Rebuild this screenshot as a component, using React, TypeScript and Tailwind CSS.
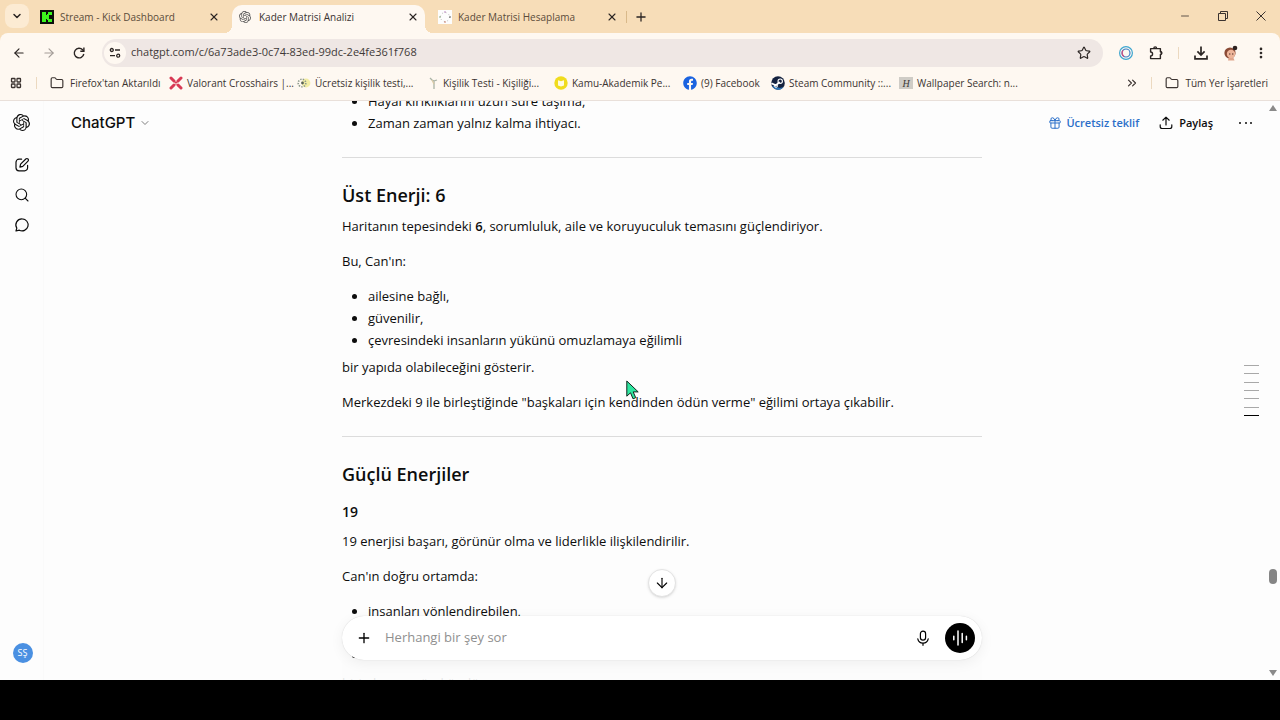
import type { ReactNode } from "react";
import {
    ArrowDown,
    ArrowLeft,
    ArrowRight,
    ChevronDown,
    ChevronsRight,
    EllipsisVertical,
    Folder,
    Gift,
    LayoutGrid,
    Minus,
    Plus,
    Search,
    Star,
    X,
} from "lucide-react";
import { SiOpenai } from "react-icons/si";
import { FaFacebook } from "react-icons/fa";

function KickLogo() {
    return (
        <svg viewBox="0 0 14 14" className="size-3.5 shrink-0" shapeRendering="crispEdges">
            <rect width="14" height="14" fill="#0b0f0b" />
            <g fill="#3df51d">
                <rect x="2" y="2" width="4" height="10" />
                <rect x="6" y="5" width="2" height="4" />
                <rect x="7" y="4" width="2" height="6" />
                <rect x="8" y="2" width="4" height="3" />
                <rect x="8" y="9" width="4" height="3" />
            </g>
        </svg>
    );
}

function MatrixLogo() {
    return (
        <svg viewBox="0 0 14 14" className="size-3.5 shrink-0">
            <rect width="14" height="14" fill="#fdfdfd" />
            <circle cx="7" cy="7" r="4.5" fill="none" stroke="#b9b9b4" strokeDasharray="1 2.53" />
            <circle cx="7" cy="2" r="0.8" fill="#b07ab8" />
            <circle cx="7" cy="12" r="0.8" fill="#c26d5c" />
            <circle cx="2" cy="7" r="0.8" fill="#7e9f72" />
            <circle cx="12" cy="7" r="0.8" fill="#444" />
        </svg>
    );
}

function ReloadIcon() {
    return (
        <svg viewBox="0 0 16 16" className="size-4" fill="none" stroke="currentColor" strokeWidth="1.4">
            <path d="M12.8 9A4.8 4.8 0 1 1 11.6 4.800L12.8 6" />
            <path d="M12.900 2.600V6.200H9.300" />
        </svg>
    );
}

function TuneIcon() {
    return (
        <svg viewBox="0 0 12 12" className="size-3" fill="none" stroke="#2b2523" strokeWidth="1.3">
            <circle cx="2.8" cy="3" r="1.5" />
            <path d="M6 3h5M1 8.7h5" />
            <circle cx="9.2" cy="8.7" r="1.5" />
        </svg>
    );
}

function ValorantIcon() {
    return (
        <svg viewBox="0 0 14 14" className="size-3.5 shrink-0" stroke="#d83a55" strokeWidth="3" strokeLinecap="round">
            <path d="M2 2l3 3M12 2L9 5M2 12l3-3M12 12L9 9" />
            <path d="M5 5l4 4M9 5L5 9" strokeWidth="1.2" />
        </svg>
    );
}

function SunIcon() {
    return (
        <svg viewBox="0 0 14 14" className="size-3.5 shrink-0" fill="none">
            <circle cx="9" cy="7" r="4.4" fill="#f3eda5" />
            <circle cx="5" cy="7" r="3.8" stroke="#8d9a8c" strokeWidth="1.6" strokeDasharray="1.4 1.2" />
            <circle cx="5.5" cy="7" r="1.4" fill="#566056" />
        </svg>
    );
}

function SproutIcon() {
    return (
        <svg viewBox="0 0 14 14" className="size-3.5 shrink-0" fill="none" stroke="#aab3a6" strokeWidth="1.3">
            <path d="M3 2l2 2 2 1M7 13V5l3-1" />
            <path d="M5 4l2 4" stroke="#d9c9a4" />
        </svg>
    );
}

function KamuIcon() {
    return (
        <svg viewBox="0 0 14 14" className="size-3.5 shrink-0">
            <circle cx="7" cy="7" r="6.7" fill="#f0dc1e" />
            <path d="M4 4.2l3 1 3-1v5.3l-3 1-3-1z" fill="#fffbe0" />
        </svg>
    );
}

function SteamIcon() {
    return (
        <svg viewBox="0 0 14 14" className="size-3.5 shrink-0" fill="none">
            <circle cx="7" cy="7" r="6.8" fill="#14223f" />
            <path d="M1 9.800A6.800 6.800 0 0 0 12.600 11L9 12z" fill="#2f75b5" />
            <path d="M.4 7.200l4.400 2.200L8.600 6" stroke="#fff" strokeWidth="1.800" />
            <circle cx="9.200" cy="5.200" r="2.200" stroke="#fff" strokeWidth="1.100" />
            <circle cx="5" cy="9.800" r="1.500" stroke="#fff" />
        </svg>
    );
}

function WallpaperIcon() {
    return (
        <span className="flex h-3 w-3.5 shrink-0 items-center justify-center bg-[#cfccc6] font-['Liberation_Serif',serif] text-[10px] italic text-[#3c3a38]">
            H
        </span>
    );
}

function ExtensionRing() {
    return (
        <svg viewBox="0 0 16 16" className="size-4" fill="none">
            <circle cx="8" cy="8" r="6.4" stroke="#3fa6cf" strokeWidth="1.2" />
            <circle cx="8" cy="8" r="4" stroke="#3e7fc4" strokeWidth="1.2" />
            <path d="M5 5.4A4 4 0 0 0 6 11.4" stroke="#d5497a" strokeWidth="1.2" />
        </svg>
    );
}

function PuzzleIcon() {
    return (
        <svg viewBox="0 0 16 16" className="size-4" fill="none" stroke="#2b2523" strokeWidth="1.4" strokeLinejoin="round">
            <path d="M2.600 3.600h9.800v3.200c1.600 0 1.600 2.600 0 2.600v4.200H2.600v-2.600c2.600 0 2.600-4 0-4z" />
            <path d="M5.800 3.400c0-2 2.800-2 2.800 0M12.600 6.800c1.600 0 1.600 2.600 0 2.600" />
        </svg>
    );
}

function DownloadIcon() {
    return (
        <svg viewBox="0 0 16 16" className="size-4" fill="none" stroke="#2b2523" strokeWidth="1.7">
            <path d="M8 1.5v8.2M4.4 6.4L8 10l3.6-3.6M2 10.6v3.2h12v-3.2" />
        </svg>
    );
}

function ProfileFace() {
    return (
        <svg viewBox="0 0 16 16" className="size-4">
            <circle cx="7" cy="8" r="5.6" fill="#8a4a35" />
            <circle cx="12" cy="3" r="2.3" fill="#2c2220" />
            <circle cx="8" cy="9" r="4.2" fill="#eeb59a" />
            <path d="M5.5 13h5l1 2.5H5z" fill="#dfa58c" />
            <path d="M6 9h1.4M9 9h1.4" stroke="#4b2c24" />
        </svg>
    );
}

function EditIcon() {
    return (
        <svg viewBox="0 0 16 16" className="size-4" fill="none" stroke="currentColor" strokeWidth="1.2" strokeLinecap="round" strokeLinejoin="round">
            <path d="M7.6 2.2H5A3 3 0 0 0 2 5.200v5.600a3 3 0 0 0 3 3h5.600a3 3 0 0 0 3-3V8.400" />
            <path d="M11.800 2a1.500 1.500 0 0 1 2.200 2.200L8.800 9.400l-2.900.7.7-2.900z" />
        </svg>
    );
}

function ChatIcon() {
    return (
        <svg viewBox="0 0 16 16" className="size-4" fill="none" stroke="currentColor" strokeWidth="1.2" strokeLinejoin="round">
            <path d="M8.200 1.900a6 6 0 1 1-2.900 11.300L2 14l.8-2.900A6 6 0 0 1 8.200 1.900z" />
        </svg>
    );
}

function ShareIcon() {
    return (
        <svg viewBox="0 0 14 14" className="size-3.5" fill="none" stroke="currentColor" strokeWidth="1.2" strokeLinecap="round" strokeLinejoin="round">
            <path d="M7 9V1.200M3.800 4.200L7 1.100l3.200 3.100M1.200 8.800v1.700a2 2 0 0 0 2 2h7.600a2 2 0 0 0 2-2V8.800" />
        </svg>
    );
}

function MicIcon() {
    return (
        <svg viewBox="0 0 16 16" className="size-4" fill="none" stroke="currentColor" strokeWidth="1.200" strokeLinecap="round">
            <rect x="5.400" y="1.200" width="5.200" height="9" rx="2.600" />
            <path d="M2.800 8.800a5.300 5.300 0 0 0 10.400 0M8 13v2.300" />
        </svg>
    );
}

function VoiceIcon() {
    return (
        <svg viewBox="0 0 16 16" className="size-4" stroke="#fff" strokeWidth="1.500" strokeLinecap="round">
            <path d="M1.800 6.300v3.400M6 1v14M10.200 3.500v9M14.400 6.300v3.400" />
        </svg>
    );
}

type TabProps = { icon: ReactNode; title: string; active?: boolean };

function Tab({ icon, title, active }: TabProps) {
    return (
        <div
            className={
                active
                    ? "relative flex h-7 w-[193px] items-center rounded-t-[10px] bg-[#fef8f1] pl-[7px] pr-1.5 text-[#3b3330]"
                    : "flex h-7 w-[193px] items-center pl-[7px] pr-1.5 text-[#5b4c3a]"
            }
        >
            {active && (
                <>
                    <span className="absolute -left-2 bottom-0 size-2 bg-[radial-gradient(circle_at_0_0,#f7ddb8_8px,#fef8f1_8px)]" />
                    <span className="absolute -right-2 bottom-0 size-2 bg-[radial-gradient(circle_at_100%_0,#f7ddb8_8px,#fef8f1_8px)]" />
                </>
            )}
            <span className="w-3.5 pb-1">{icon}</span>
            <span className="ml-1.5 flex-1 truncate pb-1">{title}</span>
            <button aria-label="Kapat" className="pb-1 text-[#2b2523]">
                <X className="size-3" strokeWidth={2.2} />
            </button>
        </div>
    );
}

const bookmarks = [
    { title: "Firefox'tan Aktarıldı", width: "w-[119px]", gap: "gap-1.5", icon: <Folder className="size-3.5 shrink-0" strokeWidth={2} /> },
    { title: "Valorant Crosshairs |...", width: "w-[128px]", gap: "gap-1", icon: <ValorantIcon /> },
    { title: "Ücretsiz kişilik testi,...", width: "w-[130px]", gap: "gap-1", icon: <SunIcon /> },
    { title: "Kişilik Testi - Kişiliği...", width: "w-[127px]", gap: "gap-0.5", icon: <SproutIcon /> },
    { title: "Kamu-Akademik Pe...", width: "w-[129px]", gap: "gap-1", icon: <KamuIcon /> },
    { title: "(9) Facebook", width: "w-[88px]", gap: "gap-1", icon: <FaFacebook className="size-3.5 shrink-0 text-[#1b63e0]" /> },
    { title: "Steam Community ::...", width: "w-[128px]", gap: "gap-1", icon: <SteamIcon /> },
    { title: "Wallpaper Search: n...", width: "w-[128px]", gap: "gap-1", icon: <WallpaperIcon /> },
];

function BrowserChrome() {
    return (
        <div className="bg-[#f7ddb8] text-[10px] text-[#3b3330]">
            <div className="flex h-[33px] items-end">
                <button aria-label="Sekmelerde ara" className="mb-[5px] ml-[5px] flex size-6 items-center justify-center rounded-lg bg-[#fcebd3] text-[#2b2523]">
                    <ChevronDown className="size-3" strokeWidth={3} />
                </button>
                <div className="ml-1 flex flex-1 items-end">
                    <div className="flex gap-1.5">
                        <Tab icon={<KickLogo />} title="Stream - Kick Dashboard" />
                        <Tab active icon={<SiOpenai className="size-3 text-[#555]" />} title="Kader Matrisi Analizi" />
                        <Tab icon={<MatrixLogo />} title="Kader Matrisi Hesaplama" />
                    </div>
                    <div className="ml-0.5 flex h-7 items-center pb-1">
                        <span className="h-3 w-px bg-[#d9b98a]" />
                        <button aria-label="Yeni sekme" className="ml-[7px] text-[#2b2523]">
                            <Plus className="size-3.5" strokeWidth={2.2} />
                        </button>
                    </div>
                </div>
                <div className="flex h-[33px] items-center pb-px text-[#3b3330]">
                    <button aria-label="Simge durumuna küçült" className="flex w-[38px] justify-center">
                        <Minus className="size-3" strokeWidth={1.6} />
                    </button>
                    <button aria-label="Önceki boyut" className="flex w-[38px] justify-center">
                        <svg viewBox="0 0 10 10" className="size-2.5" fill="none" stroke="currentColor">
                            <path d="M.5 2.500h7v7h-7zM2.500 2.500V.5h7v7h-2" />
                        </svg>
                    </button>
                    <button aria-label="Pencereyi kapat" className="flex w-[38px] justify-center">
                        <svg viewBox="0 0 10 10" className="size-2.5" stroke="currentColor">
                            <path d="M.5.5l9 9M9.500.5l-9 9" />
                        </svg>
                    </button>
                </div>
            </div>

            <div className="rounded-t-lg border-b border-[#e9e0da] bg-[#fef8f1]">
                <div className="flex h-[39px] items-center px-1 text-[#2b2523]">
                    <button aria-label="Geri" className="flex w-[30px] justify-center"><ArrowLeft className="size-3.5" /></button>
                    <button aria-label="İleri" className="flex w-[30px] justify-center text-[#a39c97]"><ArrowRight className="size-3.5" /></button>
                    <button aria-label="Yenile" className="flex w-[30px] justify-center"><ReloadIcon /></button>
                    <div className="ml-2 flex h-7 flex-1 items-center rounded-full bg-[#efe7e4] pl-0.5 pr-3">
                        <span className="flex size-[22px] items-center justify-center rounded-full bg-[#fef8f1]"><TuneIcon /></span>
                        <input
                            aria-label="Adres"
                            className="ml-[5px] flex-1 bg-transparent text-[11px] text-[#3f3a38] outline-none"
                            defaultValue="chatgpt.com/c/6a73ade3-0c74-83ed-99dc-2e4fe361f768"
                        />
                        <button aria-label="Yer işareti ekle"><Star className="size-3.5" strokeWidth={2} /></button>
                    </div>
                    <button aria-label="Uzantı" className="ml-2 flex w-[30px] justify-center"><ExtensionRing /></button>
                    <button aria-label="Uzantılar" className="flex w-[30px] justify-center"><PuzzleIcon /></button>
                    <span className="mx-[7px] h-3 w-px bg-[#ecd9c0]" />
                    <button aria-label="İndirilenler" className="flex w-[30px] justify-center"><DownloadIcon /></button>
                    <button aria-label="Profil" className="flex w-[30px] justify-center"><ProfileFace /></button>
                    <button aria-label="Menü" className="flex w-[30px] justify-center"><EllipsisVertical className="size-3.5" strokeWidth={2.6} /></button>
                </div>
                <div className="flex h-[28px] items-center pb-1.5 pl-2.5 pr-3">
                    <LayoutGrid className="size-3 shrink-0" strokeWidth={2.6} />
                    <span className="ml-3.5 h-3 w-px bg-[#ecd9c0]" />
                    <div className="ml-[13px] flex flex-1">
                        {bookmarks.map((b) => (
                            <a key={b.title} href="#" className={`flex items-center whitespace-nowrap ${b.width} ${b.gap}`}>
                                {b.icon}
                                {b.title}
                            </a>
                        ))}
                    </div>
                    <button aria-label="Diğer yer işaretleri"><ChevronsRight className="size-3.5" /></button>
                    <span className="ml-3 mr-[13px] h-3 w-px bg-[#ecd9c0]" />
                    <a href="#" className="flex items-center gap-1.5 whitespace-nowrap">
                        <Folder className="size-3.5" strokeWidth={2} />
                        Tüm Yer İşaretleri
                    </a>
                </div>
            </div>
        </div>
    );
}

function Sidebar() {
    return (
        <nav className="flex w-11 shrink-0 flex-col items-center border-r border-[#fafafa] pt-[13px] text-[#0d0d0d]">
            <a href="#" aria-label="ChatGPT"><SiOpenai className="size-[17px]" /></a>
            <button aria-label="Yeni sohbet" className="mt-[26px]"><EditIcon /></button>
            <button aria-label="Ara" className="mt-3.5"><Search className="size-4" strokeWidth={1.6} /></button>
            <button aria-label="Sohbetler" className="mt-3.5"><ChatIcon /></button>
            <button className="mb-[17px] ml-0.5 mt-auto flex size-5 items-center justify-center rounded-full bg-[#4a90e2] text-[9px] text-white">SŞ</button>
        </nav>
    );
}

function Header() {
    return (
        <header className="absolute inset-x-0 top-0 flex h-11 items-center px-7">
            <button className="-ml-px flex items-center gap-1 font-[Inter,sans-serif] text-[15px] font-medium text-[#0d0d0d]">
                ChatGPT
                <ChevronDown className="size-3 text-[#7f7f7f]" />
            </button>
            <button className="ml-auto flex items-center gap-1 text-[11px] font-semibold text-[#2b6fc9]">
                <Gift className="size-3.5" strokeWidth={1.7} />
                Ücretsiz teklif
            </button>
            <button className="ml-5 flex items-center gap-1.5 text-[11px] font-semibold text-[#0d0d0d]">
                <ShareIcon />
                Paylaş
            </button>
            <button aria-label="Diğer" className="ml-[26px] flex w-[13px] justify-between">
                <span className="size-0.5 rounded-full bg-[#0d0d0d]" />
                <span className="size-0.5 rounded-full bg-[#0d0d0d]" />
                <span className="size-0.5 rounded-full bg-[#0d0d0d]" />
            </button>
        </header>
    );
}

function List({ items }: { items: string[] }) {
    return (
        <ul className="list-disc pl-[26px] marker:text-[#0d0d0d]">
            {items.map((item) => (
                <li key={item}>{item}</li>
            ))}
        </ul>
    );
}

function Answer() {
    return (
        <article className="mx-auto -mt-[11px] max-w-[640px] text-[13px] leading-[22px] text-[#0d0d0d]">
            <List items={["Hayal kırıklıklarını uzun süre taşıma,", "Zaman zaman yalnız kalma ihtiyacı."]} />
            <hr className="mb-6 mt-[23px] border-[#dcdcdc]" />
            <h2 className="text-lg font-semibold leading-[26px]">Üst Enerji: 6</h2>
            <p className="mt-[7px]">Haritanın tepesindeki <strong className="font-semibold">6</strong>, sorumluluk, aile ve koruyuculuk temasını güçlendiriyor.</p>
            <p className="my-[13px]">Bu, Can'ın:</p>
            <List items={["ailesine bağlı,", "güvenilir,", "çevresindeki insanların yükünü omuzlamaya eğilimli"]} />
            <p className="mt-[5px]">bir yapıda olabileceğini gösterir.</p>
            <p className="mt-[13px]">Merkezdeki 9 ile birleştiğinde "başkaları için kendinden ödün verme" eğilimi ortaya çıkabilir.</p>
            <hr className="mb-6 mt-[23px] border-[#dcdcdc]" />
            <h2 className="text-lg font-semibold leading-[26px]">Güçlü Enerjiler</h2>
            <h3 className="mt-3.5 text-sm font-semibold leading-[22px]">19</h3>
            <p className="mt-[7px]">19 enerjisi başarı, görünür olma ve liderlikle ilişkilendirilir.</p>
            <p className="my-[13px]">Can'ın doğru ortamda:</p>
            <List items={["insanları yönlendirebilen,", "sorumluluk alabilen,", "lider olabilen"]} />
            <p className="mt-1.5">biri olması mümkündür.</p>
        </article>
    );
}

function Composer() {
    return (
        <div className="absolute inset-x-0 bottom-5 mx-auto flex max-w-[640px] flex-col items-center">
            <button aria-label="En alta in" className="mb-[19px] flex size-7 items-center justify-center rounded-full border border-[#e3e3e3] bg-white shadow-sm">
                <ArrowDown className="size-4" strokeWidth={1.7} />
            </button>
            <form className="flex h-11 w-full items-center rounded-full bg-white pl-3.5 pr-[7px] shadow-[0_3px_14px_rgba(0,0,0,0.06),0_0_1px_rgba(0,0,0,0.2)]">
                <button type="button" aria-label="Ekle"><Plus className="size-4" strokeWidth={2} /></button>
                <input
                    aria-label="Mesaj"
                    placeholder="Herhangi bir şey sor"
                    className="ml-[13px] flex-1 bg-transparent text-[13px] outline-none placeholder:text-[#8f8f8f]"
                />
                <button type="button" aria-label="Dikte et"><MicIcon /></button>
                <button type="button" aria-label="Sesli mod" className="ml-3.5 flex size-[30px] items-center justify-center rounded-full bg-black">
                    <VoiceIcon />
                </button>
            </form>
        </div>
    );
}

function TurnMarkers() {
    return (
        <div className="absolute right-[21px] top-[264px] flex h-[51px] w-[15px] flex-col justify-between">
            {[0, 1, 2, 3, 4, 5].map((n) => (
                <span key={n} className="h-px bg-[#a8a8a8]" />
            ))}
            <span className="h-px bg-black" />
        </div>
    );
}

function Scrollbar() {
    return (
        <div className="absolute inset-y-0 right-0 flex w-3.5 flex-col items-center pb-1 pt-1">
            <svg viewBox="0 0 8 6" className="w-2" fill="#8a8a8a"><path d="M4 0l4 6H0z" /></svg>
            <span className="mt-auto h-[15px] w-2 rounded-full bg-[#858585]" />
            <svg viewBox="0 0 8 6" className="mt-[86px] w-2" fill="#8a8a8a"><path d="M0 0h8L4 6z" /></svg>
        </div>
    );
}

export default function App() {
    return (
        <div className="relative flex h-screen flex-col bg-black font-['Open_Sans','Noto_Sans',sans-serif]">
            <BrowserChrome />
            <div className="flex min-h-0 flex-1 bg-[#fdfdfd]">
                <Sidebar />
                <main className="relative min-w-0 flex-1 overflow-hidden">
                    <Answer />
                    <Header />
                    <div className="absolute inset-x-0 bottom-0 mx-auto h-5 max-w-[640px] bg-[#fcfcfc]/90" />
                    <Composer />
                    <TurnMarkers />
                    <Scrollbar />
                </main>
            </div>
            <div className="h-10 shrink-0" />
            {/* mouse pointer */}
            <svg viewBox="0 0 13 20" className="absolute left-[626px] top-[380px] w-[13px]" fill="#2ee6a0" stroke="#10251d" strokeLinejoin="round">
                <path d="M.8 1v15.200l3.700-3.400 2.500 6 2.700-1.100-2.500-5.800h5z" />
            </svg>
        </div>
    );
}
